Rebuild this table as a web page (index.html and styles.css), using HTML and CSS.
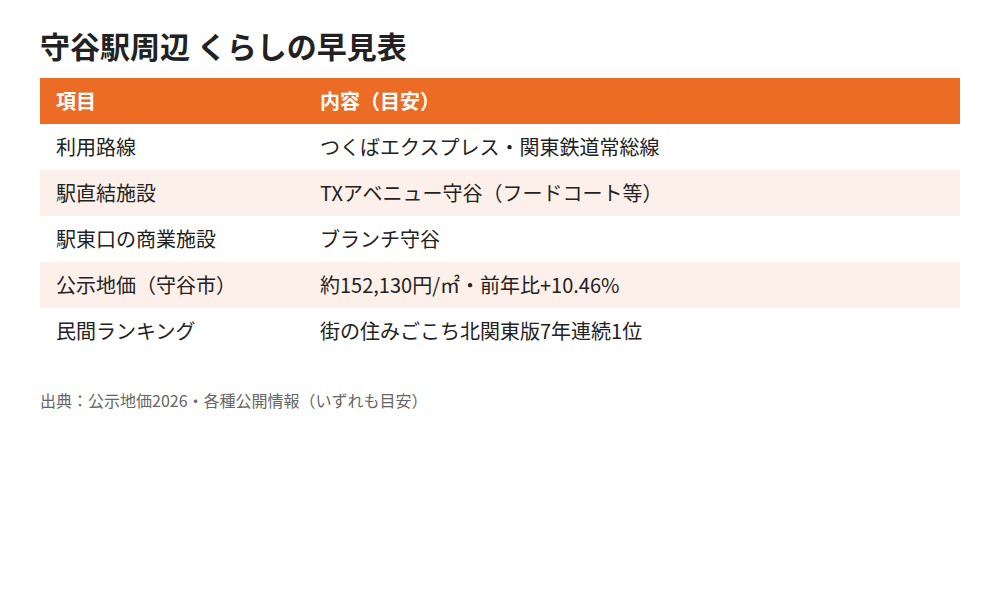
FILE: index.html
```html
<!DOCTYPE html>
<html lang="ja">
<head>
<meta charset="utf-8">
<link rel="stylesheet" href="styles.css">
</head>
<body>
<div class="page">
  <h1 class="title">守谷駅周辺 くらしの早見表</h1>
  <table class="sheet">
    <thead>
      <tr><th class="col-key">項目</th><th>内容（目安）</th></tr>
    </thead>
    <tbody>
      <tr><td>利用路線</td><td>つくばエクスプレス・関東鉄道常総線</td></tr>
      <tr><td>駅直結施設</td><td>TXアベニュー守谷（フードコート等）</td></tr>
      <tr><td>駅東口の商業施設</td><td>ブランチ守谷</td></tr>
      <tr><td>公示地価（守谷市）</td><td>約152,130円/㎡・前年比+10.46%</td></tr>
      <tr><td>民間ランキング</td><td>街の住みごこち北関東版7年連続1位</td></tr>
    </tbody>
  </table>
  <p class="source">出典：公示地価2026・各種公開情報（いずれも目安）</p>
</div>
</body>
</html>
```
FILE: styles.css
```css
html, body {
  margin: 0;
  padding: 0;
  background: #ffffff;
}
body {
  font-family: "Noto Sans CJK JP", "Noto Sans", sans-serif;
  color: #222222;
}
.page {
  padding: 24px 40px 0 40px;
}
.title {
  margin: 0;
  font-size: 30px;
  line-height: 42px;
  font-weight: 700;
  color: #222222;
}
.sheet {
  margin-top: 12px;
  width: 920px;
  border-collapse: collapse;
  table-layout: fixed;
  font-size: 20px;
}
.sheet th, .sheet td {
  height: 46px;
  padding: 0 16px;
  text-align: left;
  vertical-align: middle;
  line-height: 26px;
}
.sheet th {
  background: #ec6b25;
  color: #ffffff;
  font-weight: 700;
}
.col-key {
  width: 232px;
}
.sheet tbody tr:nth-child(even) td {
  background: #fdf0eb;
}
.source {
  margin: 34px 0 0 0;
  font-size: 16px;
  line-height: 24px;
  color: #666666;
}
```
